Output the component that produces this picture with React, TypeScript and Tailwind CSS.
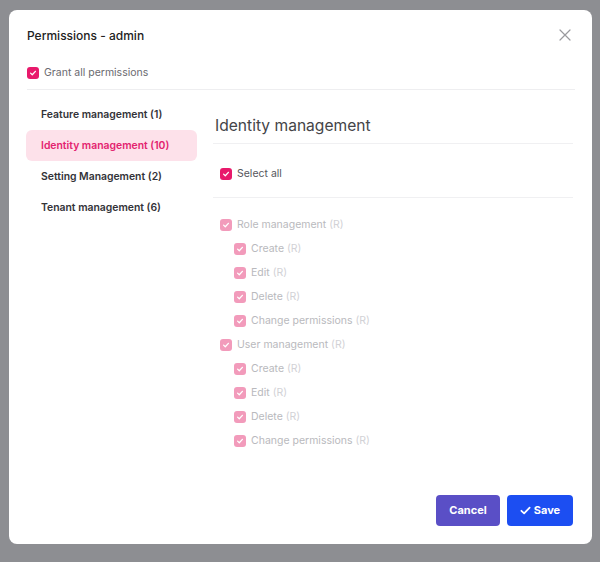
import React from 'react';

const Check = ({ disabled = false }: { disabled?: boolean }) => (
  <span
    className={`size-[12px] rounded-[3px] flex items-center justify-center shrink-0 ${disabled ? 'bg-[#f29bbb]' : 'bg-[#e8196b]'}`}
  >
    <svg width="8" height="8" viewBox="0 0 10 10" fill="none">
      <path d="M2 5.2 4.1 7.2 8 2.9" stroke="white" strokeWidth="1.6" strokeLinecap="round" strokeLinejoin="round" />
    </svg>
  </span>
);

const nav = [
  'Feature management (1)',
  'Identity management (10)',
  'Setting Management (2)',
  'Tenant management (6)',
];

const groups = [
  { name: 'Role management', children: ['Create', 'Edit', 'Delete', 'Change permissions'] },
  { name: 'User management', children: ['Create', 'Edit', 'Delete', 'Change permissions'] },
];

const Row = ({ label, indent }: { label: string; indent?: boolean }) => (
  <div className={`h-[24px] flex items-center gap-[5px] ${indent ? 'pl-[21px]' : 'pl-[7px]'}`}>
    <Check disabled />
    <span className="text-[10.5px] text-[#b9b9bd]">
      {label} <span className="text-[#d2d2d6]">(R)</span>
    </span>
  </div>
);

export default function App() {
  return (
    <div className="w-[600px] h-[562px] bg-[#8d8e92] pt-[10px] pl-[9px] font-['Inter',sans-serif]">
      <div className="w-[583px] h-[534px] bg-white rounded-[8px] flex flex-col pl-[18px] pr-[17px]">
        <div className="h-[47px] pt-[18px] flex items-start justify-between">
          <h1 className="text-[12px] leading-[16px] font-medium text-[#222]">Permissions - admin</h1>
          <svg width="12" height="12" viewBox="0 0 12 12" className="mt-[1px] mr-[4px]">
            <path d="M1 1 11 11M11 1 1 11" stroke="#9a9a9e" strokeWidth="1.2" strokeLinecap="round" />
          </svg>
        </div>
        <div className="h-[33px] flex items-center gap-[5px] border-b border-[#eeeef0] pb-[1px]">
          <Check />
          <span className="text-[10.5px] text-[#6a6a70]">Grant all permissions</span>
        </div>
        <div className="flex flex-1 pt-[9px]">
          <div className="w-[171px] -ml-[1px] flex flex-col">
            {nav.map((n, i) => (
              <div
                key={n}
                className={`h-[31px] flex items-center pl-[15px] rounded-[6px] text-[10.4px] font-semibold ${i === 1 ? 'bg-[#fde1ea] text-[#e3236f]' : 'text-[#333338]'}`}
              >
                {n}
              </div>
            ))}
          </div>
          <div className="flex-1 ml-[16px] mr-[2px] flex flex-col">
            <div className="h-[45px] flex items-center pl-[2px] pt-[9px] border-b border-[#f0f0f2]">
              <h2 className="text-[15.6px] text-[#444448]">Identity management</h2>
            </div>
            <div className="h-[54px] flex items-center gap-[5px] pl-[7px] pt-[7px] border-b border-[#f0f0f2]">
              <Check />
              <span className="text-[10.5px] text-[#55555b]">Select all</span>
            </div>
            <div className="pt-[15px] flex flex-col">
              {groups.map(g => (
                <React.Fragment key={g.name}>
                  <Row label={g.name} />
                  {g.children.map(c => (
                    <Row key={g.name + c} label={c} indent />
                  ))}
                </React.Fragment>
              ))}
            </div>
            <div className="mt-auto mb-[18px] flex justify-end gap-[7px]">
              <button className="h-[31px] w-[64px] rounded-[4px] bg-[#5a4fc6] text-white text-[11px] font-bold">Cancel</button>
              <button className="h-[31px] w-[66px] rounded-[4px] bg-[#1c4ef2] text-white text-[11px] font-bold flex items-center justify-center gap-[3px]">
                <svg width="11" height="11" viewBox="0 0 12 12" fill="none">
                  <path d="M1.5 6.3 4.5 9.2 10.5 2.8" stroke="white" strokeWidth="1.9" strokeLinecap="round" strokeLinejoin="round" />
                </svg>
                Save
              </button>
            </div>
          </div>
        </div>
      </div>
    </div>
  );
}
